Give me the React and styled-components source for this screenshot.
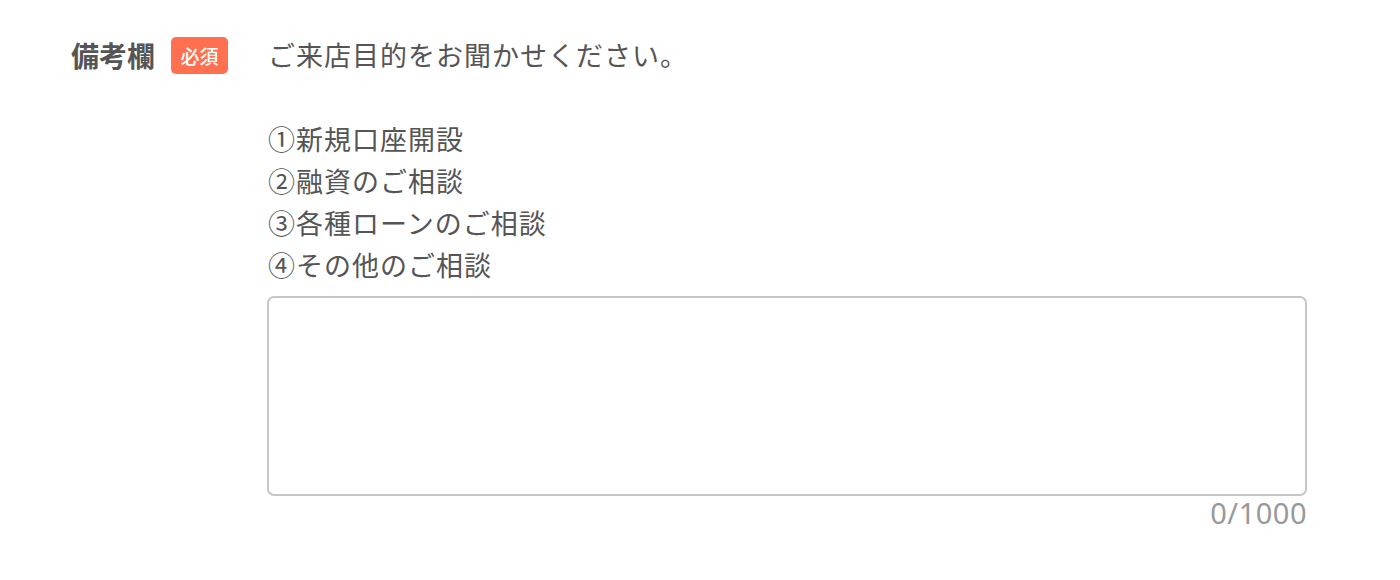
import React, { useState } from 'react'
import styled, { createGlobalStyle } from 'styled-components'

const GlobalStyle = createGlobalStyle`
    html, body {
        margin: 0;
        padding: 0;
        background-color: #fff;
    }
    body {
        font-family: "Noto Sans CJK JP", "Noto Sans", sans-serif;
        color: #555;
    }
`;

const Row = styled.section`
    display: flex;
    align-items: flex-start;
    padding: 34px 93px 0 71px;
`;

const LabelCell = styled.div`
    width: 196px;
    display: flex;
    align-items: center;
    gap: 16px;
    height: 42px;
`;

const Label = styled.span`
    font-size: 28px;
    font-weight: 700;
    color: #555;
`;

const Required = styled.span`
    display: inline-flex;
    align-items: center;
    justify-content: center;
    width: 57px;
    height: 37px;
    border-radius: 5px;
    background-color: #ff6f50;
    color: #fff;
    font-size: 19px;
    font-weight: 500;
`;

const Field = styled.div`
    flex: 1;
    display: flex;
    flex-direction: column;
`;

const Note = styled.p`
    margin: 0 0 10px 1px;
    font-size: 27px;
    line-height: 42px;
    letter-spacing: 1px;
    color: #555;
    white-space: pre-line;
`;

const TextArea = styled.textarea`
    box-sizing: border-box;
    width: 100%;
    height: 200px;
    border: 2px solid #c6c6c6;
    border-radius: 7px;
    resize: none;
    padding: 12px 16px;
    font-family: inherit;
    font-size: 24px;
    color: #555;
    outline: none;
`;

const Counter = styled.div`
    text-align: right;
    font-family: "Noto Sans", sans-serif;
    font-size: 29px;
    line-height: 36px;
    letter-spacing: 0.5px;
    color: #999;
    margin-top: -1px;
`;

const note = `ご来店目的をお聞かせください。

①新規口座開設
②融資のご相談
③各種ローンのご相談
④その他のご相談`;

export default function App() {
    const [text, setText] = useState('');

    return (
        <>
            <GlobalStyle />
            <Row>
                <LabelCell>
                    <Label>備考欄</Label>
                    <Required>必須</Required>
                </LabelCell>
                <Field>
                    <Note>{note}</Note>
                    <TextArea value={text} maxLength={1000} onChange={e => setText(e.target.value)} />
                    <Counter>{text.length}/1000</Counter>
                </Field>
            </Row>
        </>
    )
}
